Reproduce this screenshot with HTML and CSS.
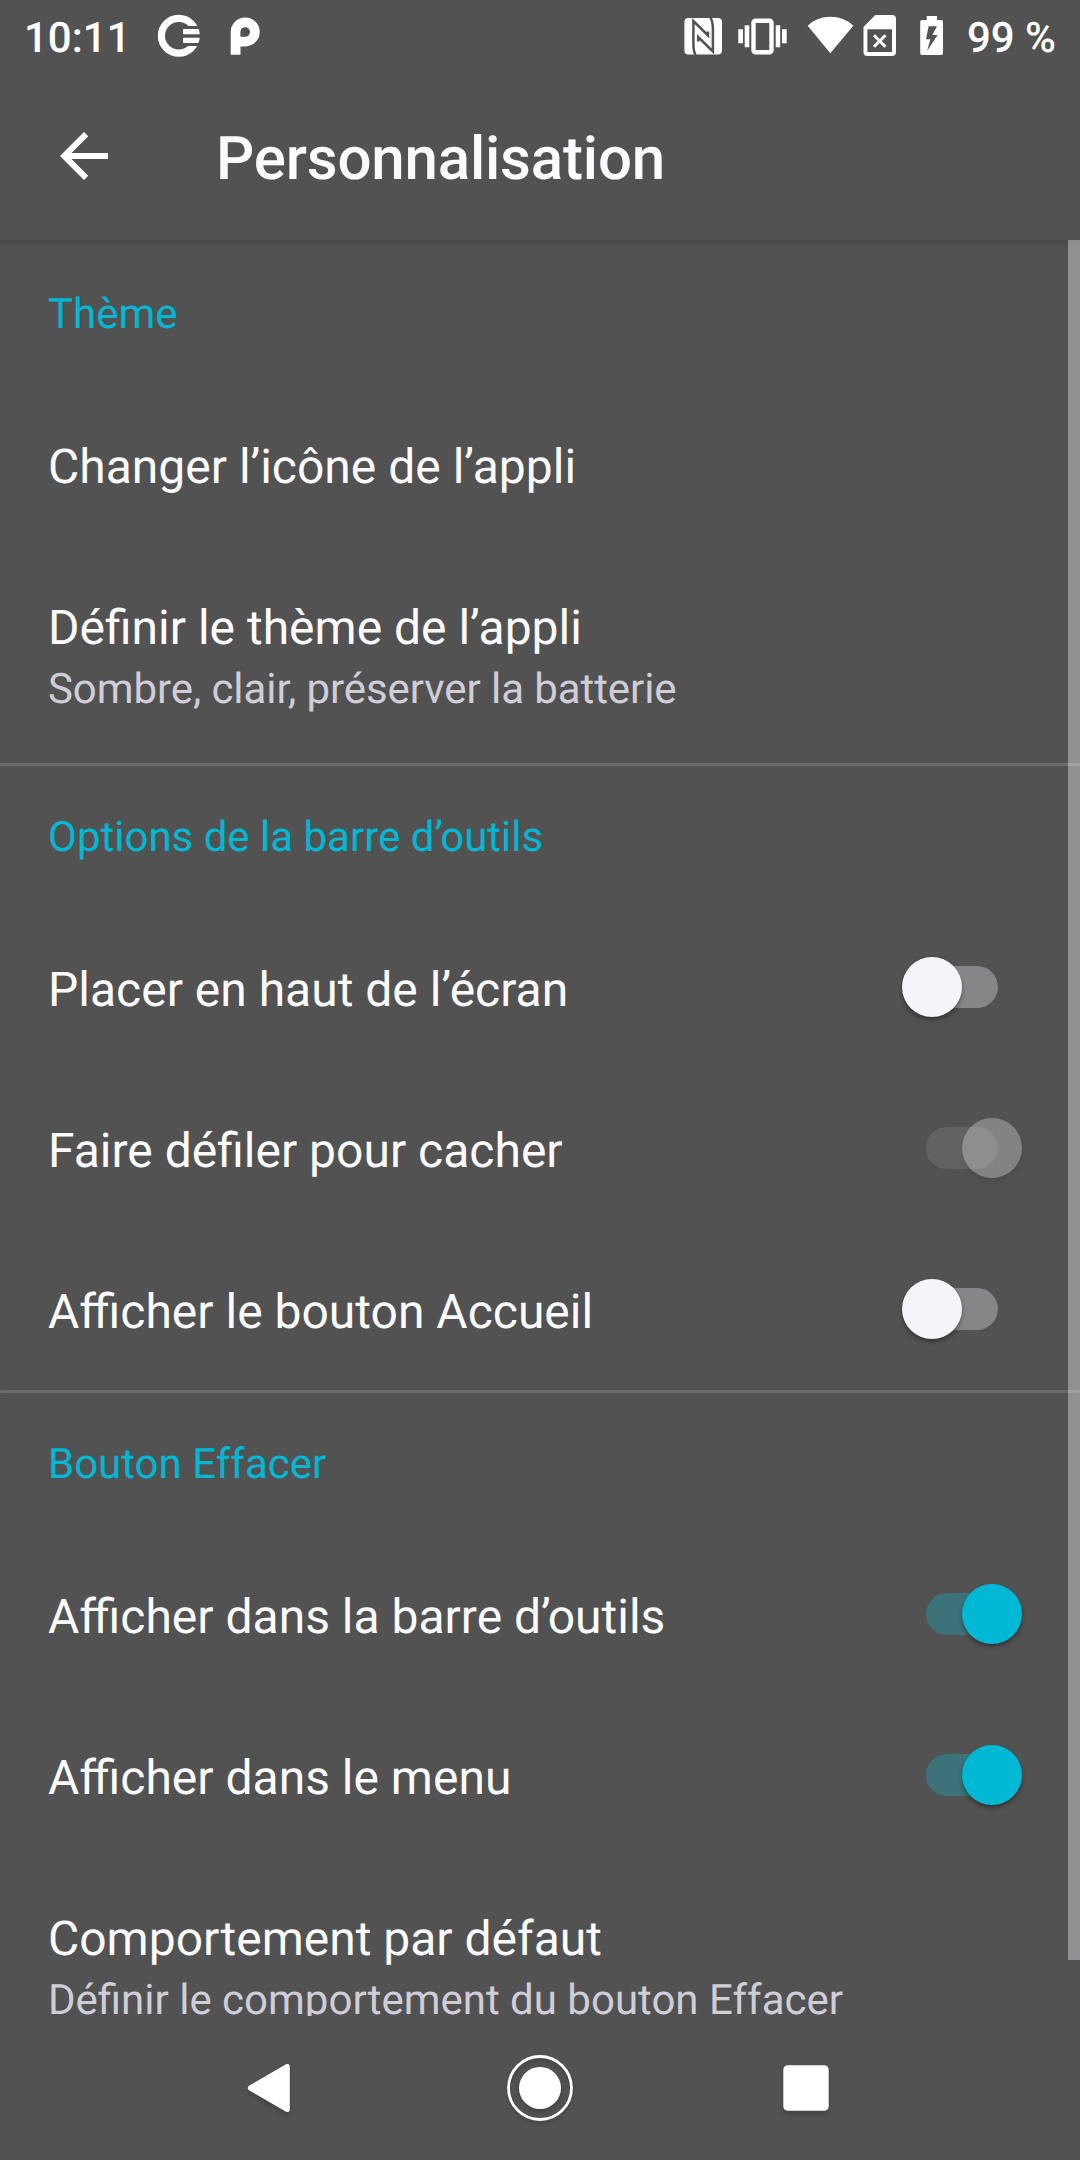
FILE: index.html
```html
<!DOCTYPE html>
<html lang="fr">
<head>
<meta charset="utf-8">
<title>Personnalisation</title>
<link rel="stylesheet" href="styles.css">
</head>
<body>
<header class="status">
  <span class="clock">10:11</span>
  <svg class="notifications" width="108" height="48" viewBox="156 12 108 48" fill="#fff">
    <clipPath id="disc"><circle cx="178.8" cy="35.8" r="21"/></clipPath>
    <clipPath id="ring"><path d="M150 10H205V26H188L184 28V43L188 46H205V60H150Z"/></clipPath>
    <circle cx="178.8" cy="35.8" r="17.4" fill="none" stroke="#fff" stroke-width="7.2" clip-path="url(#ring)"/>
    <path d="M183 29H202V34.3H183ZM183 37.7H202V43H183Z" clip-path="url(#disc)"/>
    <path fill-rule="evenodd" d="M230.7 54.8V32.3A14.5 14.5 0 1 1 245.2 46.4H240.5V54.8ZM240.4 36.8V32a4.8 4.8 0 1 1 4.8 4.8Z"/>
  </svg>
  <svg class="system" width="260" height="48" viewBox="684 12 260 48" fill="#fff">
    <rect x="684.4" y="18" width="37.6" height="36.6" rx="4"/>
    <path d="M695.8 54.8C693.5 52.5 693.4 48 693.4 44V21L708 35.5V31.5M710.2 17.8C712.6 20 712.9 25 712.9 29V51.5L698.2 37V41.5" fill="none" stroke="#525252" stroke-width="2.5"/>
    <rect x="753.5" y="20.8" width="18" height="31.4" rx="2" fill="none" stroke="#fff" stroke-width="4.4"/>
    <path d="M738.3 29.3H743V43.3H738.3ZM744.7 25.3H749.3V47.3H744.7ZM775.7 25.3H780.2V47.3H775.7ZM782 29.3H786.7V43.3H782Z"/>
    <path d="M830.3 53.3L807.7 25.7Q817 16.8 830.5 16.8T853.3 25.7Z"/>
    <path fill-rule="evenodd" d="M875.3 15H892Q896 15 896 19V52Q896 56 892 56H867.5Q863.5 56 863.5 52V27ZM867.4 29.2V52H892V29.2Z"/>
    <path d="M874 35.2L885.5 46.7M885.5 35.2L874 46.7" stroke="#fff" stroke-width="3"/>
    <path fill-rule="evenodd" d="M926.7 16H937V20H941.3Q943 20 943 22V53Q943 55 941.3 55H922Q920.2 55 920.2 53V22Q920.2 20 922 20H926.7ZM928.6 26.2L926 39.2H930.3L927.2 50.8L937.6 35H932.3L937 26.2Z"/>
  </svg>
  <span class="battery">99 %</span>
</header>
<header class="appbar">
  <svg width="72" height="72" viewBox="0 0 24 24" fill="#fff"><path d="M20 11H7.83l5.59-5.59L12 4l-8 8 8 8 1.41-1.41L7.83 13H20z"/></svg>
  <h1>Personnalisation</h1>
</header>
<main class="content">
  <section>
    <h2>Thème</h2>
    <div class="row"><span>Changer l’icône de l’appli</span></div>
    <div class="row two"><span>Définir le thème de l’appli</span><small class="tight">Sombre, clair, préserver la batterie</small></div>
  </section>
  <section>
    <h2>Options de la barre d’outils</h2>
    <div class="row"><span>Placer en haut de l’écran</span><i class="switch"></i></div>
    <div class="row"><span>Faire défiler pour cacher</span><i class="switch on disabled"></i></div>
    <div class="row"><span>Afficher le bouton Accueil</span><i class="switch"></i></div>
  </section>
  <section>
    <h2>Bouton Effacer</h2>
    <div class="row"><span>Afficher dans la barre d’outils</span><i class="switch on"></i></div>
    <div class="row"><span>Afficher dans le menu</span><i class="switch on"></i></div>
    <div class="row two"><span>Comportement par défaut</span><small>Définir le comportement du bouton Effacer</small></div>
  </section>
  <div class="scrollbar"></div>
</main>
<nav class="nav">
  <svg width="72" height="72" viewBox="0 0 72 72"><path d="M12.3 36L49.3 14.5V57.5Z" fill="#fff" stroke="#fff" stroke-width="5" stroke-linejoin="round"/></svg>
  <svg width="72" height="72" viewBox="0 0 72 72"><circle cx="36" cy="36" r="31.5" fill="none" stroke="#fff" stroke-width="2.8"/><circle cx="36" cy="36" r="21" fill="#fff"/></svg>
  <svg width="72" height="72" viewBox="0 0 72 72"><rect x="13.3" y="13.3" width="45.4" height="45.4" rx="4.5" fill="#fff"/></svg>
</nav>
</body>
</html>
```
FILE: styles.css
```css
* { box-sizing: border-box; }
body {
  margin: 0;
  width: 1080px;
  height: 2160px;
  background: #525252;
  color: #fff;
  font-family: Roboto, sans-serif;
  text-rendering: geometricPrecision;
  display: flex;
  flex-direction: column;
  overflow: hidden;
}
svg { display: block; flex: none; }
.status { height: 72px; display: flex; align-items: center; padding: 0 24px; font-size: 42px; font-weight: 500; }
.status span { padding-top: 5px; }
.notifications { margin-left: 25px; }
.system { margin-left: auto; margin-right: 23px; }
.appbar { height: 168px; display: flex; align-items: center; padding: 0 48px; gap: 96px; }
h1 { margin: 0; padding-top: 5px; font-size: 60px; font-weight: 500; letter-spacing: -.18px; color: #fbfbfe; }
.content { height: 1776px; position: relative; overflow: hidden; box-shadow: inset 0 6px 6px -4px rgba(0, 0, 0, .14); }
section + section { box-shadow: inset 0 3px #6a6a6a; }
h2 { margin: 0; height: 144px; padding: 5px 48px 0; line-height: 140px; color: #00b8d4; font-size: 42px; font-weight: 400; }
.row { height: 161px; padding: 55px 58px 0 48px; display: flex; align-items: flex-start; justify-content: space-between; font-size: 48px; line-height: 56px; color: #fbfbfe; }
.two { flex-direction: column; justify-content: flex-start; height: 218px; }
small { font-size: 42px; line-height: 68px; color: #cfcdd8; }
.tight { letter-spacing: -.08px; }
.switch { width: 120px; height: 60px; margin-top: -5px; padding: 9px 24px; position: relative; }
.switch::before { content: ""; display: block; height: 42px; border-radius: 21px; background: #868688; }
.switch::after { content: ""; position: absolute; left: 0; top: 0; width: 60px; height: 60px; border-radius: 50%; background: #f5f5f9; box-shadow: 0 3px 4px rgba(0, 0, 0, .35); }
.switch.on::before { background: #3b7379; }
.switch.on::after { left: 60px; background: #00b8d4; }
.switch.disabled::before { background: #626262; }
.switch.disabled::after { background: rgba(245, 245, 250, .3); box-shadow: 0 3px 4px rgba(0, 0, 0, .1); }
.scrollbar { position: absolute; right: 0; top: 0; width: 12px; height: 1720px; background: rgba(251, 251, 254, .38); }
.nav { height: 144px; display: flex; align-items: center; justify-content: center; gap: 194px; }
.nav svg { filter: drop-shadow(0 3px 2px rgba(0, 0, 0, .2)); }
```
